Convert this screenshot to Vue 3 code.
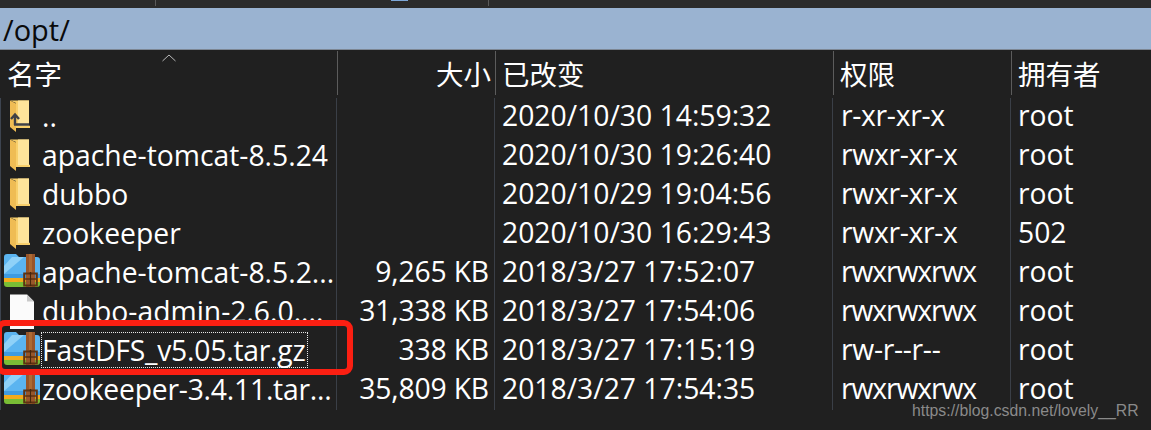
<script setup>
const rows = [
  { icon: 'up', name: '..', size: '', date: '2020/10/30 14:59:32', perm: 'r-xr-xr-x', owner: 'root' },
  { icon: 'folder', name: 'apache-tomcat-8.5.24', size: '', date: '2020/10/30 19:26:40', perm: 'rwxr-xr-x', owner: 'root' },
  { icon: 'folder', name: 'dubbo', size: '', date: '2020/10/29 19:04:56', perm: 'rwxr-xr-x', owner: 'root' },
  { icon: 'folder', name: 'zookeeper', size: '', date: '2020/10/30 16:29:43', perm: 'rwxr-xr-x', owner: '502' },
  { icon: 'zip', name: 'apache-tomcat-8.5.2...', size: '9,265 KB', date: '2018/3/27 17:52:07', perm: 'rwxrwxrwx', owner: 'root' },
  { icon: 'file', name: 'dubbo-admin-2.6.0....', size: '31,338 KB', date: '2018/3/27 17:54:06', perm: 'rwxrwxrwx', owner: 'root' },
  { icon: 'zip', name: 'FastDFS_v5.05.tar.gz', size: '338 KB', date: '2018/3/27 17:15:19', perm: 'rw-r--r--', owner: 'root', focus: true, tight: true },
  { icon: 'zip', name: 'zookeeper-3.4.11.tar...', size: '35,809 KB', date: '2018/3/27 17:54:35', perm: 'rwxrwxrwx', owner: 'root', tight: true }
]
</script>

<template>
  <div class="page">
    <div class="topbar">
      <i class="tick t1"></i>
      <i class="tab"></i>
      <i class="tick t2"></i>
    </div>
    <div class="path">/opt/</div>

    <div class="grid head">
      <div class="h">名字</div>
      <div class="h size-h">大小</div>
      <div class="h">已改变</div>
      <div class="h">权限</div>
      <div class="h">拥有者</div>
      <svg class="caret" width="16" height="8" viewBox="0 0 16 8"><path d="M1.5 7 8 1l6.5 6" fill="none" stroke="#b9b9b9" stroke-width="1"/></svg>
    </div>

    <div class="body">
      <div v-for="r in rows" :key="r.name" class="grid row">
        <div class="c name">
          <svg v-if="r.icon === 'folder' || r.icon === 'up'" class="ico" width="36" height="36" viewBox="0 0 36 36">
            <path d="M6 2.5h19v25l1 .5v2H12V5z" fill="#f8cf6b"/>
            <path d="M14 2.5h11V28H14z" fill="#fde39a"/>
            <path d="M6 2.5l6 3V34l-6-5z" fill="#efbc54"/>
            <template v-if="r.icon === 'up'">
              <path d="M11 27V18M7 21l4-4.500 4 4.500M10 26.500h15" fill="none" stroke="#3f4046" stroke-width="2.400"/>
            </template>
          </svg>
          <svg v-else-if="r.icon === 'zip'" class="ico" width="36" height="36" viewBox="0 0 36 36">
            <path d="M0 3q0-3 3-3h9l3 3h18q3 0 3 3v18H0z" fill="#5bb4f0"/>
            <path d="M0 12l8-9h12L0 20z" fill="#8fd1f8"/>
            <path d="M0 20h36v4H0z" fill="#3f9be0"/>
            <path d="M0 24h36v4H0z" fill="#f3ab1c"/>
            <path d="M0 28h36v2q0 3-3 3H3q-3 0-3-3z" fill="#79bd35"/>
            <path d="M22 0h9v33h-9z" fill="#99562a"/>
            <path d="M25 0h3v33h-3z" fill="#ad6a33"/>
            <path d="M20.200 19.500h12.600v12h-12.600z" fill="none" stroke="#5e3212" stroke-width="2"/>
            <path d="M21 25h11" stroke="#5e3212" stroke-width="1.500"/>
            <path d="M26.500 18v14" stroke="#47250c" stroke-width="1.500"/>
          </svg>
          <svg v-else class="ico" width="36" height="36" viewBox="0 0 36 36">
            <path d="M6 1.500h17l7 7V37H6z" fill="#fbfbfb"/>
            <path d="M23 1.500v7h7z" fill="#c9c9c9"/>
          </svg>
          <span class="label" :class="{ focus: r.focus, tight: r.tight }">{{ r.name }}</span>
        </div>
        <div class="c size">{{ r.size }}</div>
        <div class="c">{{ r.date }}</div>
        <div class="c perm" :class="{ wide: r.perm === 'rwxrwxrwx' }">{{ r.perm }}</div>
        <div class="c">{{ r.owner }}</div>
      </div>
    </div>

    <div class="mark"></div>
    <div class="watermark">https://blog.csdn.net/lovely__RR</div>
  </div>
</template>

<style>
html, body { margin: 0; background: #202020; }
</style>

<style scoped>
.page {
  position: relative;
  width: 1151px;
  height: 430px;
  overflow: hidden;
  background: #202020;
  color: #fff;
  font-family: "Open Sans", "Noto Sans CJK SC", sans-serif;
}
.topbar {
  position: relative;
  height: 8px;
  background: #2b2b2b;
}
.tick { position: absolute; top: 0; width: 1px; height: 6px; background: #5a5a5a; }
.t1 { left: 155px; }
.t2 { left: 488px; }
.tab { position: absolute; left: 391px; top: 0; width: 17px; height: 1px; background: #7da7d8; }
.path {
  height: 41px;
  line-height: 43px;
  padding-left: 3px;
  background: #9ab3d1;
  border-bottom: 1px solid #7d8794;
  color: #0a0a0a;
  font-size: 29px;
}
.grid {
  display: grid;
  grid-template-columns: 337px 158px 338px 178px 1fr;
}
.head {
  position: relative;
  height: 46px;
  margin: 1px 0 1px 1px;
}
.h {
  font-size: 27.5px;
  line-height: 47px;
  padding-left: 6px;
  border-right: 1px solid #5c5c5c;
  height: 44px;
  box-sizing: border-box;
}
.h:nth-child(5) { border-right: 0; }
.size-h { padding-right: 4px; text-align: right; }
.caret { position: absolute; left: 160px; top: 3px; }
.body { border-left: 1px solid #3d4450; }
.row { height: 39px; margin-left: -1px; }
.c {
  font-size: 28.3px;
  line-height: 35px;
  padding-left: 7px;
  border-right: 1px solid #3a3f47;
  white-space: nowrap;
  box-sizing: border-box;
}
.c:nth-child(5) { border-right: 0; }
.name { display: flex; align-items: flex-start; padding-left: 0; }
.ico { flex: none; margin-left: 4px; margin-right: 1px; }
.size { text-align: right; padding-right: 5px; letter-spacing: -0.15px; }
.perm { padding-left: 8px; letter-spacing: -0.3px; }
.perm.wide { letter-spacing: -1.1px; }
.label { line-height: 34px; padding: 0 1px 0 0; border: 1px dotted transparent; }
.label.tight { letter-spacing: -0.22px; }
.label.focus { border-color: #e8e8e8; }
.mark {
  position: absolute;
  left: -4px;
  top: 320px;
  width: 357px;
  height: 55px;
  box-sizing: border-box;
  border: 6px solid #fb1f12;
  border-radius: 9px;
}
.watermark {
  position: absolute;
  left: 912px;
  top: 400px;
  font-family: "Liberation Sans", sans-serif;
  font-size: 15.8px;
  line-height: 22px;
  color: #8a8a8a;
}
</style>
